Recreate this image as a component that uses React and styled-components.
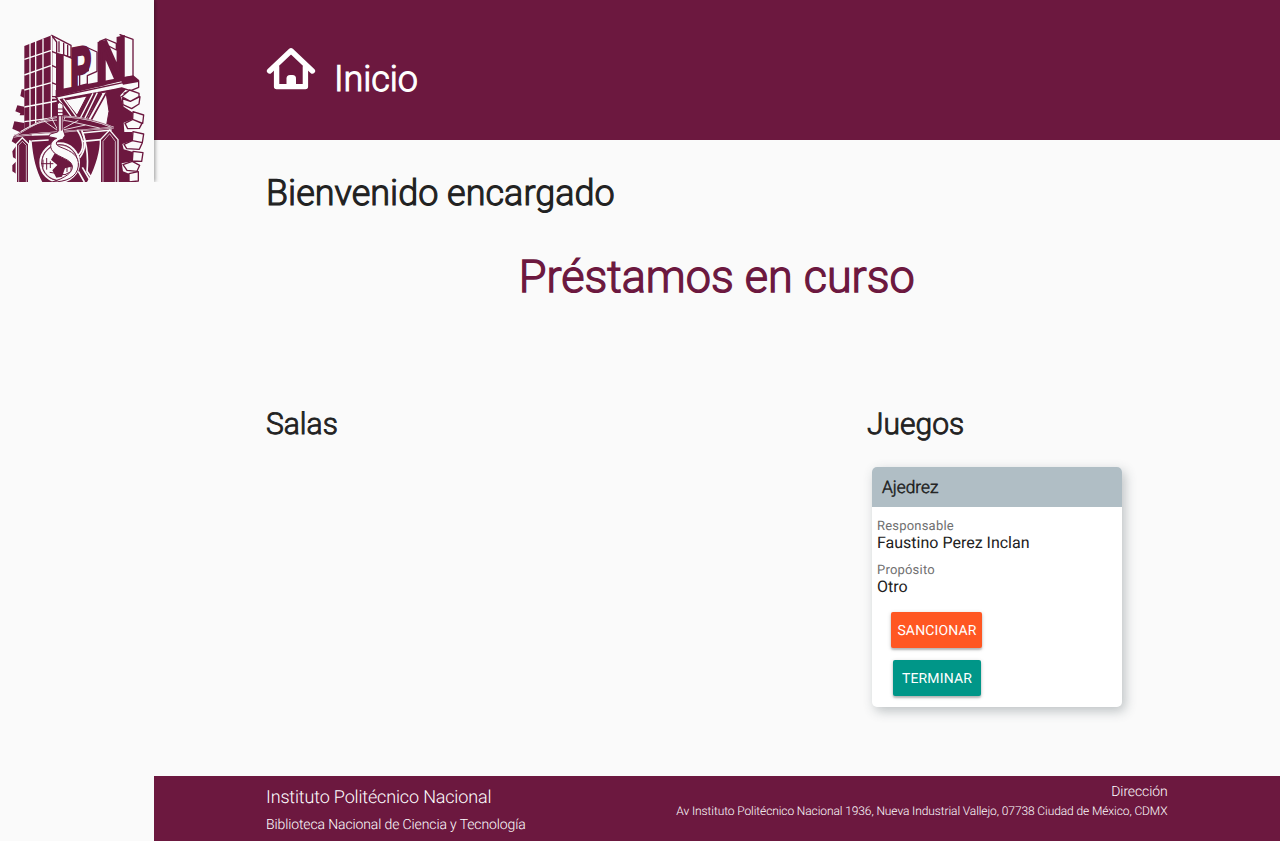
import React from 'react';
import styled, { createGlobalStyle } from 'styled-components';

const wine = '#6c183f';
const paper = '#fafafa';

const GlobalStyle = createGlobalStyle`
  * { box-sizing: border-box; }
  body {
    margin: 0;
    background: ${paper};
    color: #212121;
    font-family: Roboto, sans-serif;
    text-rendering: geometricPrecision;
  }
  h1, h2, h3, h4, p, dl, dd { margin: 0; font-weight: 400; }
  h1, h2, h3, h4 {
    font-weight: 300;
    -webkit-text-stroke: 0.03em currentColor;
  }
`;

const Page = styled.div`
  display: grid;
  grid-template-columns: 154px 1fr;
  min-height: 841px;
`;

const Sidebar = styled.aside`
  position: relative;
  z-index: 1;
  height: 182px;
  background: ${paper};
  box-shadow: 1px 0 4px rgba(0, 0, 0, 0.4);
  clip-path: inset(0 -8px 0 0);
`;

const LogoSvg = styled.svg`
  display: block;
  width: 154px;
  height: 182px;
`;

const Content = styled.div`
  display: flex;
  flex-direction: column;
`;

const Header = styled.header`
  display: flex;
  align-items: flex-start;
  height: 140px;
  padding: 47px 112px 0;
  background: ${wine};
  color: #fff;
`;

const HomeSvg = styled.svg`
  display: block;
  flex: none;
  width: 50px;
  height: 44px;
`;

const HeaderTitle = styled.h1`
  margin: 9px 0 0 18px;
  font-size: 36px;
  line-height: 46px;
  letter-spacing: -0.1px;
`;

const Main = styled.main`
  flex: 1;
  padding: 30px 112.5px 0 112px;
`;

const Welcome = styled.h2`
  font-size: 36px;
  line-height: 46px;
`;

const LoansTitle = styled.h2`
  margin-top: 32px;
  color: ${wine};
  font-size: 45px;
  line-height: 58px;
  text-align: center;
`;

const Columns = styled.div`
  display: grid;
  grid-template-columns: 2fr 1fr;
  margin-top: 99px;
`;

const ColumnTitle = styled.h3`
  font-size: 30px;
  line-height: 40px;
`;

const Card = styled.article`
  width: 250px;
  height: 240px;
  margin: 22px 0 0 5px;
  overflow: hidden;
  border-radius: 5px;
  background: #fff;
  box-shadow: 3px 4px 12px rgba(55, 71, 79, 0.32);
`;

const CardHeader = styled.h4`
  height: 40px;
  padding: 0 10px;
  background: #b0bec5;
  font-size: 17.3px;
  line-height: 42px;
`;

const Details = styled.dl`
  padding: 10px 5px 0;
`;

const Label = styled.dt`
  padding-top: 1px;
  color: #6f6f6f;
  font-size: 13px;
  line-height: 17px;
  letter-spacing: 0.2px;
`;

const Value = styled.dd`
  && { margin-bottom: 10px; }
  font-size: 16px;
  line-height: 16px;
`;

const Actions = styled.div`
  display: flex;
  flex-direction: column;
  align-items: center;
  gap: 12px;
  width: 91px;
  padding-top: 7px;
  margin-left: 19px;
`;

const Button = styled.button`
  width: ${(p) => p.$width};
  height: 36px;
  padding: 2px 0 0 1px;
  border: 0;
  border-radius: 2px;
  background: ${(p) => p.$color};
  box-shadow: 0 2px 2px rgba(0, 0, 0, 0.2), 0 1px 4px rgba(0, 0, 0, 0.18);
  color: #fff;
  font: 400 14px/34px Roboto, sans-serif;
  letter-spacing: 0.15px;
  text-rendering: inherit;
`;

const Footer = styled.footer`
  display: flex;
  justify-content: space-between;
  height: 65px;
  padding: 0 112.5px 0 112px;
  background: ${wine};
  color: #fff;
`;

const FooterBlock = styled.div`
  padding-top: ${(p) => p.$top};
  text-align: ${(p) => p.$align || 'left'};
`;

const FooterText = styled.p`
  font-size: ${(p) => p.$size};
  line-height: ${(p) => p.$line};
  font-weight: 300;
  letter-spacing: ${(p) => p.$track || '-0.12px'};
`;

function Logo() {
  return (
    <LogoSvg viewBox="-15 -84 462 546" role="img" aria-label="Instituto Politécnico Nacional">
      <g fill={wine} stroke="none">
        <path d="M58 54L140 22V212H156V462H58z" />
        <path d="M58 184L50 184L46 204L58 210zM58 236L37 232L31 250L46 256L44 262H58zM58 285L28 280L22 302L44 312H58zM60 318L28 320L20 340L36 350L22 370L24 388L38 396L22 412V430L38 440L34 462H60z" />
        <path d="M155 212L375 172L346 202L356 236L384 254L383 274L356 284L358 312L383 312L382 338L352 348L356 364L384 372V400L350 406L354 430L372 437V462H60V300H155z" />
      </g>
      <g fill={paper} stroke={wine} strokeWidth="4" strokeLinejoin="round">
        <path d="M140 24L155 32V206H140zM140 70L155 76M140 112L155 119M140 164L155 170" />
        <path d="M140 22L198 52V88L155 76V42z" />
        <path d="M162 40V73M176 44V80M188 50V84" />
        <path d="M174 80L203 92V182L174 188z" />
        <path d="M243 57L276 72V130L247 143V168L224 174V135L250 128V70z" />
        <path d="M345 20L384 34V145L354 150V26z" />
        <path d="M284 40L303 33L334 46V66z" />
        <path d="M152 207L372 160L401 160V178L357 196L376 188L350 180L330 184L160 216z" />
        <path d="M374 186L402 196V206L376 220L350 206zM352 212L376 220L405 206L402 228L380 242L354 230zM384 251L416 261L413 286L383 274zM360 286L383 274L411 286L403 301L368 302zM384 311L416 318L412 344L382 338zM357 349L382 338L412 344L403 364L365 362zM384 370L414 374L410 400L382 399zM354 410L382 400L404 412L396 430L366 427zM372 437L400 431V459L372 462z" />
      </g>
      <g fill={wine} fontFamily="Liberation Sans, sans-serif" fontWeight="700" fontSize="10">
        <path d="M154 76L174 80V190L154 190z" />
        <text transform="matrix(9.4 -1.6 0 17.4 196 184)" stroke={wine} strokeWidth=".6">P</text>
        <text transform="matrix(12.4 -3.2 0 17.8 274 172)" stroke={wine} strokeWidth=".7">N</text>
        <path d="M152 186L385 142L403 157L401 162L354 170L349 160L152 207z" />
      </g>
      <g fill={paper} stroke={wine} strokeWidth="3">
        <path d="M180 216L246 204L216 262z" />
        <path d="M290 194L303 192L312 250L304 296L236 284z" />
      </g>
      <g fill="none" stroke={paper} strokeWidth="4">
        <path d="M264 196L224 274M277 194L235 280M160 212L205 275M175 212L214 266" />
        <path d="M75 45V315M92 38V315M114 32V315M139 23V315M58 94L139 67M58 141L139 112M58 186L139 164M58 237L155 219M58 281L155 268" />
      </g>
      <path d="M290 196L242 284M303 196L252 288" fill="none" stroke={wine} strokeWidth="5" />
      <g>
        <path d="M80 338C84 390 94 428 112 462H72V336zM286 340V462H246C266 430 280 390 286 340z" fill={paper} />
        <path d="M234 318Q252 370 246 430L268 462M220 430L238 462M232 418L258 462" fill="none" stroke={paper} strokeWidth="5" />
        <path d="M26 326C90 286 130 263 184 266C242 270 282 280 326 299L237 306C180 311 89 316 26 326z" fill={wine} stroke={paper} strokeWidth="5" />
        <path d="M26 326C90 286 130 263 184 266C242 270 282 280 326 299L237 306C180 311 89 316 26 326z" fill="none" stroke={wine} strokeWidth="2" />
        <path d="M48 310C106 275 158 270 207 283L284 300M160 309L116 278M160 309L139 269M160 309L180 268M160 309L220 277M160 309L241 291" fill="none" stroke={paper} strokeWidth="2.5" />
        <path d="M80 321L138 319M80 339L131 336M230 315L320 306M232 340L288 335" stroke={paper} strokeWidth="5" />
        <path d="M217 306Q250 358 216 385M230 307Q252 353 224 389" fill="none" stroke={paper} strokeWidth="5" />
      </g>
      <g>
        <circle cx="164" cy="404" r="58" fill={wine} stroke={paper} strokeWidth="6" />
        <circle cx="164" cy="404" r="53" fill={paper} stroke={wine} strokeWidth="2" />
        <path d="M150 374L180 390L209 388L205 415L180 421L171 446L154 449L142 427L157 411L138 395z" fill={wine} />
        <path d="M108 407H145M180 408H222M114 395V418M125 390V425M136 400V420M186 398V432M198 388V430M210 392V421M134 433L180 440L209 425" fill="none" stroke={wine} strokeWidth="3" />
        <path d="M157 228L164 223L174 230V304L180 322L173 334C149 338 148 351 168 358C201 370 223 384 220 414C216 448 183 462 142 462C180 450 205 433 202 414C198 393 163 390 144 371C130 354 139 337 155 331L131 326L136 318L158 312z" fill={paper} stroke={wine} strokeWidth="3" />
        <path d="M151 243H177M154 254H174M154 263H174M161 263V310M169 263V308" stroke={wine} strokeWidth="3" />
      </g>
      <g fill={wine} stroke={paper} strokeWidth="4">
        <path d="M34 470V348L52 329L71 348V470zM286 470V335L314 306L339 335V470z" />
        <path d="M41 470V352L52 340L64 352V470M294 470V340L314 317L331 340V470" strokeWidth="2" />
      </g>
    </LogoSvg>
  );
}

function HomeIcon() {
  return (
    <HomeSvg viewBox="0 0 50 44" fill="none" stroke="#fff" strokeLinecap="round" strokeLinejoin="round">
      <path d="M3.6 24L25 3.8L46.4 24" strokeWidth="5.4" />
      <path d="M10.6 20V39.6H39.4V20" strokeWidth="5.4" />
      <path d="M20.5 40V31.5Q20.5 28 24 28H26.5Q30 28 30 31.5V40z" fill="#fff" stroke="none" />
    </HomeSvg>
  );
}

export default function App() {
  return (
    <>
      <GlobalStyle />
      <Page>
        <Sidebar><Logo /></Sidebar>
        <Content>
          <Header>
            <HomeIcon />
            <HeaderTitle>Inicio</HeaderTitle>
          </Header>
          <Main>
            <Welcome>Bienvenido encargado</Welcome>
            <LoansTitle>Préstamos en curso</LoansTitle>
            <Columns>
              <section><ColumnTitle>Salas</ColumnTitle></section>
              <section>
                <ColumnTitle>Juegos</ColumnTitle>
                <Card>
                  <CardHeader>Ajedrez</CardHeader>
                  <Details>
                    <Label>Responsable</Label>
                    <Value>Faustino Perez Inclan</Value>
                    <Label>Propósito</Label>
                    <Value>Otro</Value>
                  </Details>
                  <Actions>
                    <Button $color="#ff5722" $width="91px">SANCIONAR</Button>
                    <Button $color="#009688" $width="88px">TERMINAR</Button>
                  </Actions>
                </Card>
              </section>
            </Columns>
          </Main>
          <Footer>
            <FooterBlock $top="8px">
              <FooterText $size="18px" $line="28px" $track="-0.16px">Instituto Politécnico Nacional</FooterText>
              <FooterText $size="14px" $line="27px">Biblioteca Nacional de Ciencia y Tecnología</FooterText>
            </FooterBlock>
            <FooterBlock $top="6px" $align="right">
              <FooterText $size="14px" $line="20px">Dirección</FooterText>
              <FooterText $size="12px" $line="18px" $track="-0.1px">Av Instituto Politécnico Nacional 1936, Nueva Industrial Vallejo, 07738 Ciudad de México, CDMX</FooterText>
            </FooterBlock>
          </Footer>
        </Content>
      </Page>
    </>
  );
}
